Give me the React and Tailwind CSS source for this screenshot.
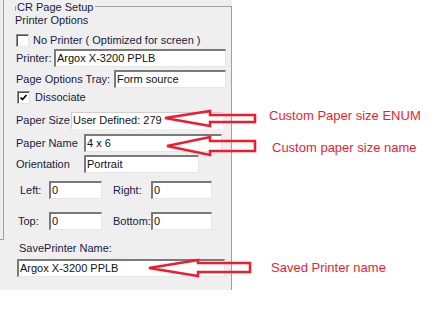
import React from 'react';

const Check = ({ checked }) => (
  <div className="w-[13px] h-[13px] shrink-0 bg-white border-t border-l border-t-[#8a8a8a] border-l-[#8a8a8a] border-b border-r border-b-[#e4e4e4] border-r-[#e4e4e4] shadow-[inset_1px_1px_0_#505050] flex items-center justify-center">
    {checked && (
      <svg width="11" height="11" viewBox="0 0 11 11">
        <path d="M2.5 5.5 L4.5 7.5 L8.5 3" stroke="#000" strokeWidth="1.7" fill="none" />
      </svg>
    )}
  </div>
);

const Field = ({ className = '', children }) => (
  <div className={`h-[18px] bg-white border-t-2 border-l-2 border-t-[#7a7a7a] border-l-[#7a7a7a] border-b border-r border-b-[#e6e6e6] border-r-[#e6e6e6] pl-[1px] leading-[15px] text-[#111] whitespace-nowrap overflow-hidden ${className}`}>
    {children}
  </div>
);

const App = () => {
  return (
    <div className="relative w-[447px] h-[330px] bg-white font-['Liberation_Sans',Arial,sans-serif] text-[11px] text-[#1a1a40]">
      <div className="w-[232px] h-[290px] bg-[#efefef] flex items-start">
        <div className="w-[4px] h-[240px] shrink-0 border-r border-b border-[#a0a0a0]" />

        <div className="relative ml-[11px] mt-[6px] w-[217px] h-[284px] border-t border-r border-[#a0a0a0] flex flex-col items-start">
          <div className="absolute left-0 top-0 w-px h-[4px] bg-[#a0a0a0]" />
          <span className="-mt-[7px] ml-[1px] pl-[1px] pr-[2px] h-[14px] leading-[14px] bg-[#efefef]">CR Page Setup</span>
          <div className="h-[13px] leading-[13px]">Printer Options</div>

          <div className="mt-[7px] ml-[1px] h-[13px] flex items-center">
            <Check />
            <span className="ml-[4px]">No Printer ( Optimized for screen )</span>
          </div>

          <div className="mt-[2px] ml-[1px] h-[18px] flex items-center">
            <span className="w-[38px]">Printer:</span>
            <Field className="w-[172px]">Argox X-3200 PPLB</Field>
          </div>

          <div className="mt-[3px] ml-[1px] h-[18px] flex items-center">
            <span className="w-[98px]">Page Options Tray:</span>
            <Field className="w-[112px]">Form source</Field>
          </div>

          <div className="mt-[3px] ml-[2px] h-[13px] flex items-center">
            <Check checked />
            <span className="ml-[5px]">Dissociate</span>
          </div>

          <div className="mt-[8px] ml-[1px] h-[17px] flex items-center">
            <span className="w-[55px]">Paper Size</span>
            <div className="w-[152px] h-[17px] bg-white border-t border-l border-[#cfcfcf] pl-[1px] leading-[15px] text-[#111]">User Defined: 279</div>
          </div>

          <div className="mt-[5px] ml-[1px] h-[18px] flex items-center">
            <span className="w-[68px]">Paper Name</span>
            <Field className="w-[138px]">4 x 6</Field>
          </div>

          <div className="mt-[3px] ml-[1px] h-[18px] flex items-center">
            <span className="w-[68px]">Orientation</span>
            <Field className="w-[115px]">Portrait</Field>
          </div>

          <div className="mt-[8px] ml-[5px] h-[18px] flex items-center">
            <span className="w-[29px]">Left:</span>
            <Field className="w-[53px]">0</Field>
            <span className="ml-[11px] w-[38px]">Right:</span>
            <Field className="w-[61px]">0</Field>
          </div>

          <div className="mt-[13px] ml-[3px] h-[18px] flex items-center">
            <span className="w-[31px]">Top:</span>
            <Field className="w-[53px]">0</Field>
            <span className="ml-[11px] w-[38px]">Bottom:</span>
            <Field className="w-[61px]">0</Field>
          </div>

          <div className="mt-[11px] ml-[4px] h-[14px] leading-[14px]">SavePrinter Name:</div>

          <div className="mt-[4px] ml-[2px]">
            <Field className="w-[208px]">Argox X-3200 PPLB</Field>
          </div>
        </div>
      </div>

      <svg className="absolute inset-0 pointer-events-none" width="447" height="330" viewBox="0 0 447 330">
        <g fill="none" stroke="#ee1c2e" strokeWidth="2.5" strokeLinejoin="miter">
          <polygon points="165,118 210,111 210,115 255,115 255,122 210,122 210,126" />
          <polygon points="167,146 210,137 210,141 255,141 255,151 210,151 210,155" />
          <polygon points="149,268 198,260 198,263 250,263 250,272 198,272 198,276" />
        </g>
      </svg>

      <div className="absolute left-[269px] top-[108px] text-[13px] leading-[16px] text-[#ee1c2e]">Custom Paper size ENUM</div>
      <div className="absolute left-[272px] top-[140px] text-[13px] leading-[16px] text-[#ee1c2e]">Custom paper size name</div>
      <div className="absolute left-[271px] top-[260px] text-[13px] leading-[16px] text-[#ee1c2e]">Saved Printer name</div>
    </div>
  );
};

export default App;
